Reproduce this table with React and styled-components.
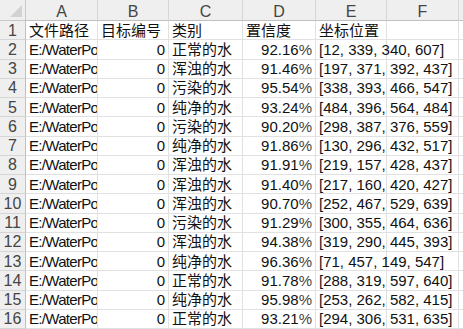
import React from "react";
import styled, { createGlobalStyle } from "styled-components";

const Global = createGlobalStyle`
  html, body { margin: 0; padding: 0; background: #fff; }
  body { font-family: "Liberation Sans", "Noto Sans CJK SC", sans-serif; }
`;

const Sheet = styled.div`
  display: grid;
  grid-template-columns: 26px 72px 71px 74px 73px 71px 72px 1fr;
  grid-template-rows: 21px repeat(16, 19.25px);
  width: 463px;
  height: 329px;
  overflow: hidden;
  font-size: 15px;
  line-height: 17px;
  color: #111;
`;

const Corner = styled.div`
  position: relative;
  background: #efefef;
  border-right: 1px solid #c8c8c8;
  border-bottom: 1px solid #c8c8c8;
  box-sizing: border-box;
`;

const CornerMark = styled.svg`
  position: absolute;
  right: 3px;
  bottom: 3px;
`;

const ColHead = styled.div`
  background: #efefef;
  border-right: 1px solid #d6d6d6;
  border-bottom: 1px solid #c0c0c0;
  box-sizing: border-box;
  display: flex;
  align-items: center;
  justify-content: center;
  color: #454545;
  font-size: 16px;
  padding-top: 2px;
`;

const RowHead = styled.div`
  background: #efefef;
  border-right: 1px solid #c0c0c0;
  border-bottom: 1px solid #d6d6d6;
  box-sizing: border-box;
  display: flex;
  align-items: center;
  justify-content: center;
  color: #454545;
  font-size: 16px;
`;

const Cell = styled.div`
  border-right: 1px solid ${(p) => (p.$noRight ? "transparent" : "#e1e1e1")};
  border-bottom: 1px solid #e1e1e1;
  box-sizing: border-box;
  display: flex;
  align-items: center;
  justify-content: ${(p) => (p.$right ? "flex-end" : "flex-start")};
  padding: 0 3px;
  white-space: nowrap;
  overflow-x: ${(p) => (p.$clip ? "hidden" : "visible")};
  letter-spacing: ${(p) => (p.$clip ? "-0.7px" : "normal")};
  position: relative;
  z-index: ${(p) => (p.$over ? 1 : 0)};
`;

const Pct = styled.span`
  color: #444;
`;

const rows = [
  ["正常的水", "92.16", "[12, 339, 340, 607]"],
  ["浑浊的水", "91.46", "[197, 371, 392, 437]"],
  ["污染的水", "95.54", "[338, 393, 466, 547]"],
  ["纯净的水", "93.24", "[484, 396, 564, 484]"],
  ["污染的水", "90.20", "[298, 387, 376, 559]"],
  ["纯净的水", "91.86", "[130, 296, 432, 517]"],
  ["浑浊的水", "91.91", "[219, 157, 428, 437]"],
  ["浑浊的水", "91.40", "[217, 160, 420, 427]"],
  ["浑浊的水", "90.70", "[252, 467, 529, 639]"],
  ["污染的水", "91.29", "[300, 355, 464, 636]"],
  ["浑浊的水", "94.38", "[319, 290, 445, 393]"],
  ["纯净的水", "96.36", "[71, 457, 149, 547]"],
  ["正常的水", "91.78", "[288, 319, 597, 640]"],
  ["纯净的水", "95.98", "[253, 262, 582, 415]"],
  ["正常的水", "93.21", "[294, 306, 531, 635]"],
];

export default function App() {
  return (
    <>
      <Global />
      <Sheet>
        <Corner>
          <CornerMark width="12" height="12" viewBox="0 0 12 12">
            <polygon points="12,0 12,12 0,12" fill="#d2d2d2" />
          </CornerMark>
        </Corner>
        {["A", "B", "C", "D", "E", "F", ""].map((c, i) => (
          <ColHead key={i}>{c}</ColHead>
        ))}

        <RowHead>1</RowHead>
        <Cell>文件路径</Cell>
        <Cell>目标编号</Cell>
        <Cell>类别</Cell>
        <Cell>置信度</Cell>
        <Cell $over>坐标位置</Cell>
        <Cell />
        <Cell $noRight />

        {rows.map((r, i) => (
          <React.Fragment key={i}>
            <RowHead>{i + 2}</RowHead>
            <Cell $clip>E:/WaterPol</Cell>
            <Cell $right>0</Cell>
            <Cell>{r[0]}</Cell>
            <Cell $right>
              {r[1]}
              <Pct>%</Pct>
            </Cell>
            <Cell $over>{r[2]}</Cell>
            <Cell />
            <Cell $noRight />
          </React.Fragment>
        ))}
      </Sheet>
    </>
  );
}
